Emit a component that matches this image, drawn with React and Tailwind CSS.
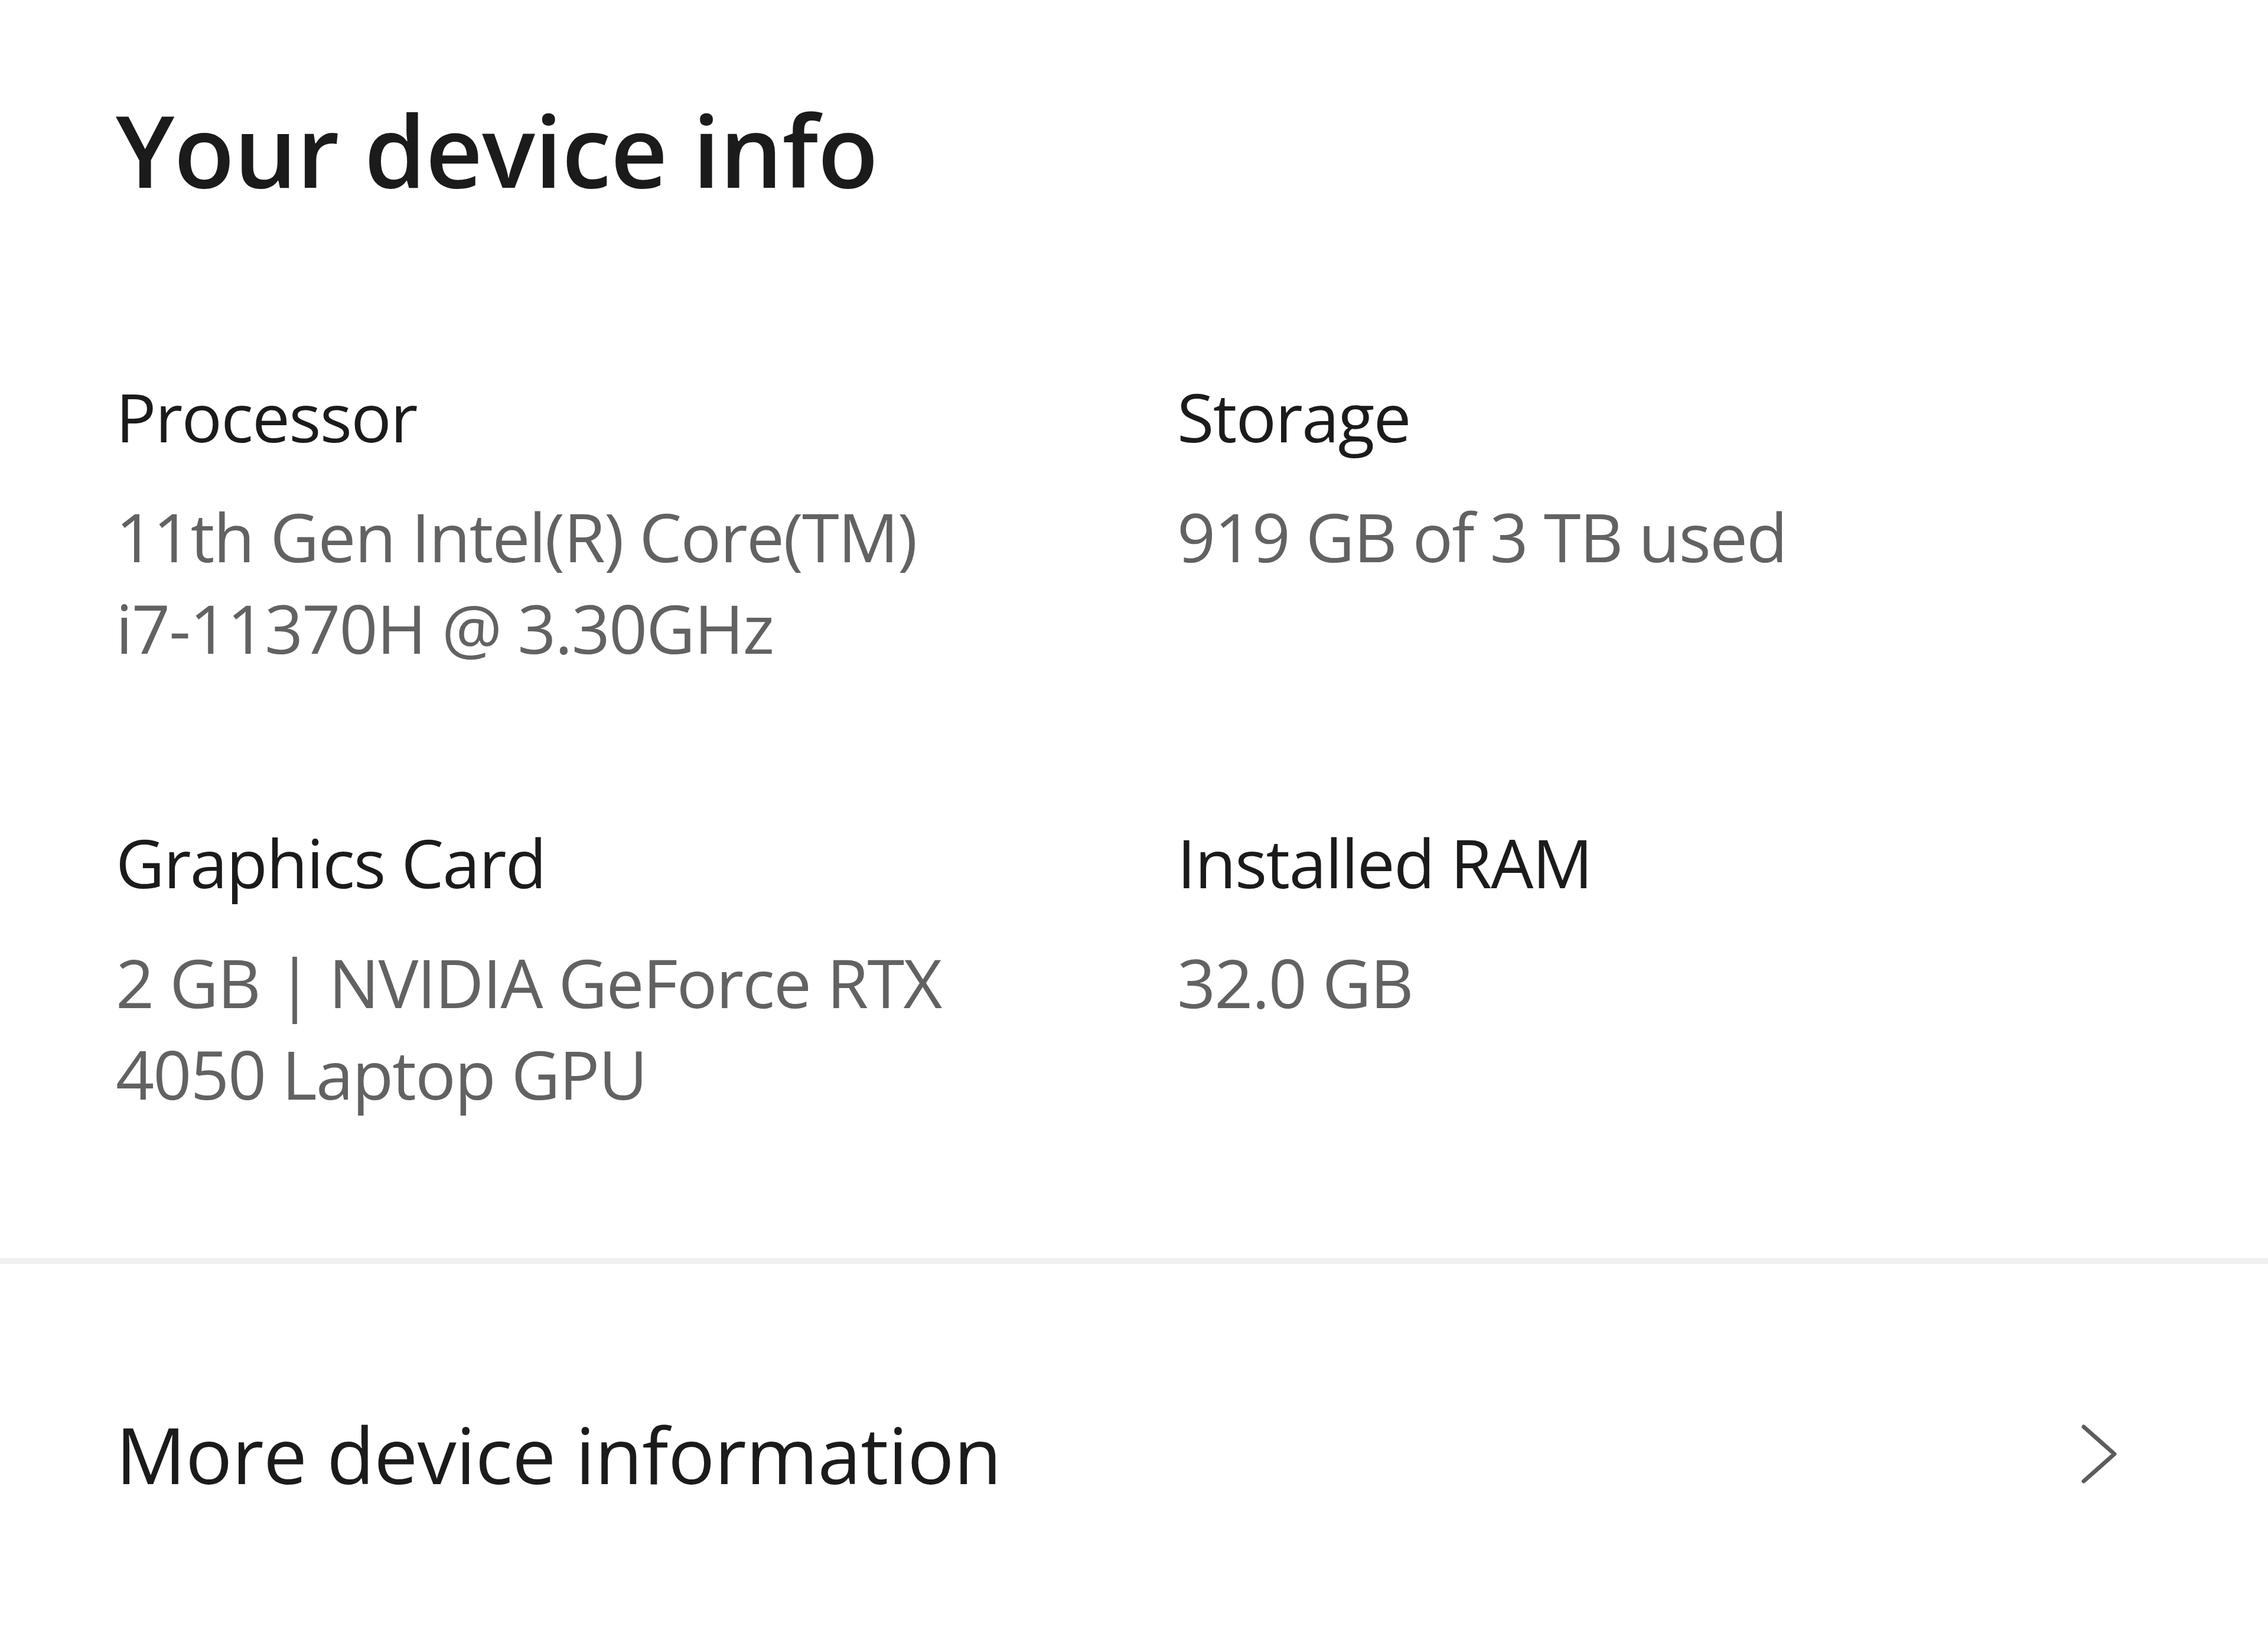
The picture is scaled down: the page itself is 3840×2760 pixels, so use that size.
export default function App() {
  const font = { fontFamily: '"Open Sans", "Noto Sans", sans-serif' };
  return (
    <div className="w-[3840px] h-[2760px] overflow-hidden bg-white" style={font}>
      <div className="pl-[196px] pr-[200px]">
        <h1 className="pt-[153px] text-[168px] leading-[200px] font-semibold tracking-[-0.005em] text-[#1b1b1b]">
          Your device info
        </h1>
        <div className="mt-[274px] grid grid-cols-[1797px_1fr] gap-y-[242px]">
          <Item label="Processor" lines={["11th Gen Intel(R) Core(TM)", "i7-11370H @ 3.30GHz"]} />
          <Item label="Storage" lines={["919 GB of 3 TB used"]} />
          <Item label="Graphics Card" lines={["2 GB | NVIDIA GeForce RTX", "4050 Laptop GPU"]} />
          <Item label="Installed RAM" lines={["32.0 GB"]} />
        </div>
      </div>
      <div className="mt-[235px] h-[10px] bg-[#f0f0f0]" />
      <div className="flex items-center justify-between pl-[196px] pr-[254px] pt-[227px]">
        <span className="text-[132px] leading-[190px] tracking-[-0.005em] text-[#1b1b1b]">
          More device information
        </span>
        <svg width="64" height="104" viewBox="0 0 64 104" className="text-[#5c5c5c]">
          <polyline points="6,6 58,52 6,98" fill="none" stroke="currentColor" strokeWidth="7" strokeLinecap="round" strokeLinejoin="round" />
        </svg>
      </div>
    </div>
  );
}

function Item({ label, lines }) {
  return (
    <div>
      <div className="text-[114px] leading-[155px] tracking-[-0.016em] text-[#1b1b1b]">{label}</div>
      <div className="mt-[48px] text-[114px] leading-[155px] tracking-[-0.016em] text-[#626262]">
        {lines.map((l) => (
          <div key={l}>{l}</div>
        ))}
      </div>
    </div>
  );
}
